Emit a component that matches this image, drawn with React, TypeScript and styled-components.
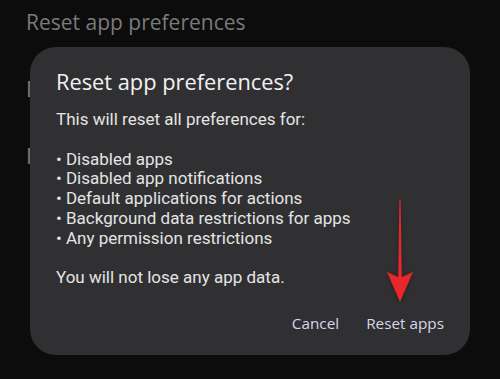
import React from "react";
import styled, { createGlobalStyle } from "styled-components";

const Global = createGlobalStyle`
  html, body { margin: 0; padding: 0; background: #0b0b0b; }
  body { width: 500px; height: 379px; overflow: hidden; }
`;

const Screen = styled.div`
  position: relative;
  width: 500px;
  height: 379px;
  background: #0c0c0c;
  overflow: hidden;
  font-family: Roboto, "Noto Sans", sans-serif;
`;

const BgList = styled.div`
  display: flex;
  flex-direction: column;
  align-items: flex-start;
  padding: 8px 0 0 26px;
`;

const BgItem = styled.div<{ $h: number }>`
  height: ${(p) => p.$h}px;
  font-size: 21px;
  line-height: 28px;
  color: #7a7a7a;
  font-family: "Open Sans", Roboto, sans-serif;
  white-space: nowrap;
`;

const Dialog = styled.div`
  position: absolute;
  left: 30px;
  top: 47px;
  width: 440px;
  height: 308px;
  box-sizing: border-box;
  border-radius: 26px;
  background: #303032;
  padding: 21px 26px 0 26px;
  display: flex;
  flex-direction: column;
`;

const Title = styled.h2`
  margin: 0;
  font-family: "Open Sans", Roboto, sans-serif;
  font-weight: 400;
  font-size: 21.8px;
  line-height: 28px;
  color: #f2f2f2;
`;

const Body = styled.div`
  margin-top: 14px;
  font-size: 17px;
  line-height: 19.8px;
  color: #e4e4e4;
`;

const Line = styled.div`
  white-space: nowrap;
`;
const Blank = styled.div`
  height: 19.8px;
`;

const Actions = styled.div`
  margin-top: 25px;
  display: flex;
  justify-content: flex-end;
  gap: 27px;
`;

const Action = styled.button`
  background: none;
  border: none;
  padding: 0;
  font-family: "Open Sans", Roboto, sans-serif;
  font-size: 15.3px;
  font-weight: 500;
  line-height: 20px;
  color: #d9d6ea;
  cursor: pointer;
`;

const Arrow = styled.svg`
  position: absolute;
  left: 384px;
  top: 198px;
  width: 32px;
  height: 106px;
  filter: drop-shadow(0 1px 2px rgba(0,0,0,0.35));
`;

export default function App() {
  return (
    <Screen>
      <Global />
      <BgList>
        <BgItem $h={67}>Reset app preferences</BgItem>
        <BgItem $h={67}>D</BgItem>
        <BgItem $h={67}>P</BgItem>
      </BgList>
      <Dialog>
        <Title>Reset app preferences?</Title>
        <Body>
          <Line>This will reset all preferences for:</Line>
          <Blank />
          <Line>• Disabled apps</Line>
          <Line>• Disabled app notifications</Line>
          <Line>• Default applications for actions</Line>
          <Line>• Background data restrictions for apps</Line>
          <Line>• Any permission restrictions</Line>
          <Blank />
          <Line>You will not lose any app data.</Line>
        </Body>
        <Actions>
          <Action>Cancel</Action>
          <Action>Reset apps</Action>
        </Actions>
      </Dialog>
      <Arrow viewBox="0 0 32 106">
        <path d="M15.4 2 L16.6 2 L17.8 80 L14.2 80 Z" fill="#e8262c" />
        <path d="M3 74 L16 80 L29 74 L16 104 Z" fill="#e8262c" />
      </Arrow>
    </Screen>
  );
}
